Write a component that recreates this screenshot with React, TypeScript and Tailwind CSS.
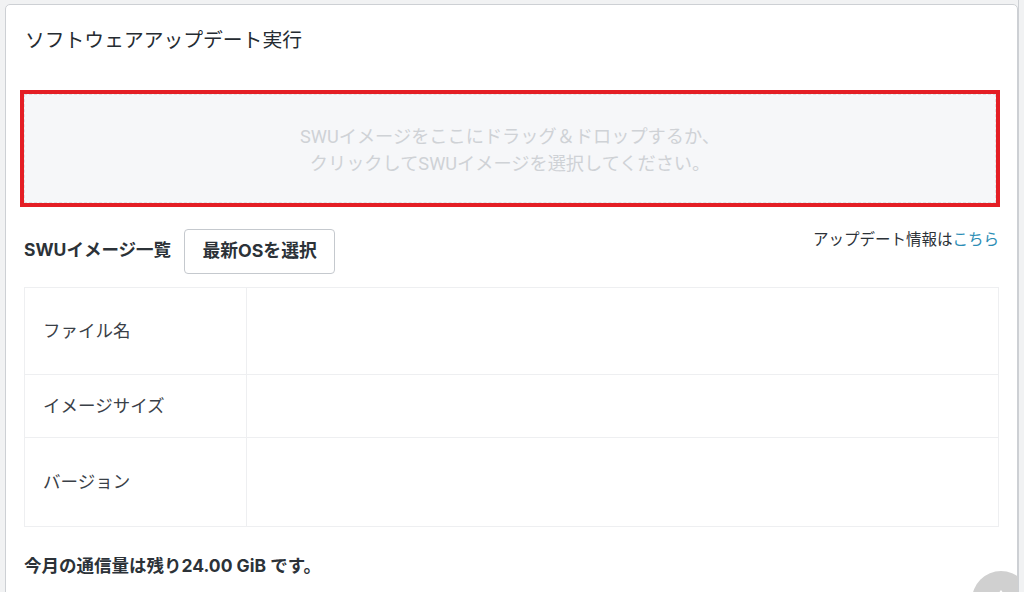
import React from 'react';

const jp = { fontFamily: 'Inter, "Noto Sans CJK JP", sans-serif' };
const dropFont = { fontFamily: 'Roboto, "Noto Sans CJK JP", sans-serif' };

const rows = [
  { label: 'ファイル名', h: 'h-[86px]' },
  { label: 'イメージサイズ', h: 'h-[63px]' },
  { label: 'バージョン', h: 'h-[89px]' },
];

export default function App() {
  return (
    <div className="relative w-[1024px] h-[592px] overflow-hidden bg-[#f1f2f3]" style={jp}>
      {/* Main card */}
      <div className="ml-[5px] mt-[4px] w-[1013px] h-[620px] bg-white border border-[#cdd0d4] rounded-[5px] pl-[18px] pr-[18px] pt-[21px]">
        <h1 className="text-[19.8px] leading-[28px] text-[#252b31] pl-[1px]">ソフトウェアアップデート実行</h1>

        {/* Drop zone */}
        <div className="mt-[36px] -ml-[4px] w-[980px] h-[117px] border-4 border-[#e41e25]">
          <div
            className="h-full border border-dashed border-[#dfe1e4] bg-[#f6f7f9] flex flex-col items-center justify-center text-[18.2px] leading-[27px] text-[#cfd2d6] pt-[2px]"
            style={dropFont}
          >
            <p>SWUイメージをここにドラッグ＆ドロップするか、</p>
            <p>クリックしてSWUイメージを選択してください。</p>
          </div>
        </div>

        {/* List header */}
        <div className="mt-[22px] flex items-start justify-between">
          <div className="flex items-center gap-[13px]">
            <span className="text-[17.5px] font-bold text-[#2c3238] -mt-[3px]">SWUイメージ一覧</span>
            <button className="w-[151px] h-[45px] border border-[#c5c9ce] rounded-[4px] bg-white text-[17.8px] font-bold text-[#2c3238]">
              最新OSを選択
            </button>
          </div>
          <p className="mt-[1px] text-[15.5px] leading-[20px] text-[#2c3238]">
            アップデート情報は<span className="text-[#2b8db5]">こちら</span>
          </p>
        </div>

        {/* Info table */}
        <div className="mt-[13px] w-[975px] border border-[#eeeff1]">
          {rows.map((r, i) => (
            <div key={r.label} className={`flex ${r.h} ${i > 0 ? 'border-t border-[#eeeff1]' : ''}`}>
              <div className="w-[222px] flex items-center pl-[18px] text-[17.5px] text-[#3a4047] border-r border-[#eeeff1]">
                {r.label}
              </div>
              <div className="flex-1" />
            </div>
          ))}
        </div>

        <p className="mt-[26px] text-[17.5px] font-bold text-[#2c3238]">今月の通信量は残り24.00 GiB です。</p>
      </div>

      {/* Scroll to top button */}
      <div className="absolute left-[972px] top-[571px] w-[58px] h-[58px] rounded-full bg-[#d0d0d0] flex justify-center pt-[18px]">
        <svg width="14" height="10" viewBox="0 0 14 10">
          <path d="M7 1 L13 9 H1 Z" fill="white" />
        </svg>
      </div>
      <div className="absolute right-0 top-0 w-[6px] h-full bg-[#f1f2f3] border-l border-[#cdd0d4]" />
    </div>
  );
}
